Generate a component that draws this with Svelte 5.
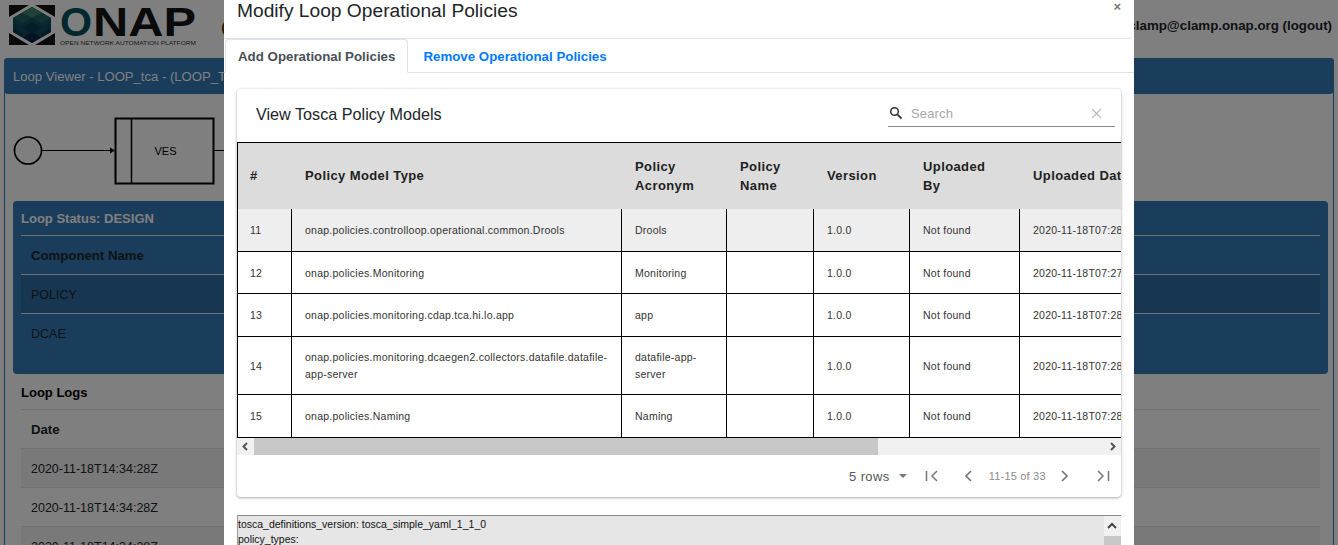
<script lang="ts">
  const components = ['POLICY', 'DCAE'];
  const logs = ['2020-11-18T14:34:28Z', '2020-11-18T14:34:28Z', '2020-11-18T14:34:28Z'];
  const columns = ['#', 'Policy Model Type', 'Policy Acronym', 'Policy Name', 'Version', 'Uploaded By', 'Uploaded Date'];
  const policies = [
    { id: 11, type: 'onap.policies.controlloop.operational.common.Drools', acronym: 'Drools', date: '2020-11-18T07:28:11Z' },
    { id: 12, type: 'onap.policies.Monitoring', acronym: 'Monitoring', date: '2020-11-18T07:27:58Z' },
    { id: 13, type: 'onap.policies.monitoring.cdap.tca.hi.lo.app', acronym: 'app', date: '2020-11-18T07:28:02Z' },
    { id: 14, type: 'onap.policies.monitoring.dcaegen2.collectors.datafile.datafile-app-server', acronym: 'datafile-app-server', date: '2020-11-18T07:28:05Z', tall: true },
    { id: 15, type: 'onap.policies.Naming', acronym: 'Naming', date: '2020-11-18T07:28:09Z' }
  ];
</script>

<div class="page">
  <nav class="navbar">
    <svg class="logo" width="197" height="46" viewBox="0 0 197 46">
      <path d="M9 5h20L9 17zM55 5H35l20 12zM9 45h20L9 33zM55 45H35l20-12z" fill="#151515" />
      <path d="M32 7l19 11v14L32 43 13 32V18z" fill="#0e4a58" />
      <path d="M32 7l19 11-9.500 5.500L32 18l-9.500 5.500L13 18z" fill="#1f6463" />
      <path d="M32 7l9.500 5.500L32 18l-9.500-5.500z" fill="#3d7f74" />
      <path d="M13 18l9.500 5.500L32 18l9.500 5.500L51 18v4l-19 11-19-11z" fill="#11525c" />
      <path d="M32 33l9.500-5.500L32 22l-9.500 5.500z" fill="#0a3c4f" />
      <path d="M32 43l-9.500-5.500L32 32l9.500 5.500z" fill="#0a2547" />
      <path d="M13 28l9.500 5.500-0 4L13 32zM51 28l-9.500 5.500v4L51 32z" fill="#0b3550" />
      <text x="60" y="36" class="logo-word" textLength="32" lengthAdjust="spacingAndGlyphs" fill="#04505e">O</text>
      <text x="93" y="36" class="logo-word" textLength="103" lengthAdjust="spacingAndGlyphs" fill="#151515">NAP</text>
      <text x="60" y="45" class="logo-tag" textLength="136" lengthAdjust="spacingAndGlyphs" fill="#333">OPEN NETWORK AUTOMATION PLATFORM</text>
    </svg>
    <span class="brand">CLAMP</span>
    <span class="user">Hello:clamp@clamp.onap.org (logout)</span>
  </nav>

  <section class="viewer">
    <div class="viewer-head">Loop Viewer - LOOP_tca - (LOOP_TCA_v1)</div>
    <div class="viewer-body">
      <svg class="diagram" width="300" height="95" viewBox="0 0 300 95">
        <circle cx="28" cy="55.500" r="13.500" fill="none" stroke="#000" stroke-width="1.700" />
        <path d="M42 55.500h68" stroke="#000" stroke-width="1" />
        <path d="M110 52.500l5 3-5 3z" fill="#000" />
        <rect x="115.500" y="23.500" width="98" height="65" fill="none" stroke="#000" stroke-width="2" />
        <path d="M131.500 23.500v65" stroke="#000" stroke-width="1.500" />
        <path d="M214 55.500h86" stroke="#000" stroke-width="1" />
        <text x="165.500" y="60" class="diagram-label">VES</text>
      </svg>

      <div class="status">
        <h3>Loop Status: DESIGN</h3>
        <div class="grid-row grid-head">Component Name</div>
        {#each components as name, i}
          <div class="grid-row" class:dark={i === 0}>{name}</div>
        {/each}
      </div>

      <div class="logs">
        <h3>Loop Logs</h3>
        <div class="grid-row grid-head">Date</div>
        {#each logs as date, i}
          <div class="grid-row" class:stripe={i % 2 === 0}>{date}</div>
        {/each}
      </div>
    </div>
  </section>
</div>

<div class="scrim"></div>

<div class="modal">
  <header class="modal-head">
    <h4>Modify Loop Operational Policies</h4>
    <span class="close">×</span>
  </header>

  <div class="tabs">
    <span class="tab active">Add Operational Policies</span>
    <span class="tab">Remove Operational Policies</span>
  </div>

  <div class="modal-body">
    <div class="card">
      <div class="toolbar">
        <h6>View Tosca Policy Models</h6>
        <div class="search">
          <svg width="14" height="14" viewBox="0 0 14 14">
            <circle cx="5.500" cy="5.500" r="3.800" fill="none" stroke="#333" stroke-width="1.500" />
            <path d="M8.300 8.300l4.200 4.200" stroke="#333" stroke-width="1.800" />
          </svg>
          <span class="placeholder">Search</span>
          <svg class="clear" width="11" height="11" viewBox="0 0 11 11">
            <path d="M1 1l9 9M10 1l-9 9" stroke="#bbb" stroke-width="1.100" />
          </svg>
        </div>
      </div>

      <div class="table-wrap">
        <table>
          <thead>
            <tr>
              {#each columns as col}
                <th>{col}</th>
              {/each}
            </tr>
          </thead>
          <tbody>
            {#each policies as p, i}
              <tr class:first={i === 0} class:tall={p.tall}>
                <td>{p.id}</td>
                <td>{p.type}</td>
                <td>{p.acronym}</td>
                <td></td>
                <td>1.0.0</td>
                <td>Not found</td>
                <td>{p.date}</td>
              </tr>
            {/each}
          </tbody>
        </table>
      </div>

      <div class="hscroll">
        <svg class="arrow" width="17" height="17" viewBox="0 0 17 17"><path d="M10 5l-3.500 3.500L10 12" fill="none" stroke="#555" stroke-width="2" /></svg>
        <div class="hthumb"></div>
        <svg class="arrow end" width="17" height="17" viewBox="0 0 17 17"><path d="M7 5l3.500 3.500L7 12" fill="none" stroke="#555" stroke-width="2" /></svg>
      </div>

      <div class="pager">
        <span class="rows">5 rows</span>
        <svg class="caret" width="8" height="4" viewBox="0 0 8 4"><path d="M0 0h8L4 4z" fill="#777" /></svg>
        <svg class="page-btn first-btn" width="14" height="12" viewBox="0 0 14 12"><path d="M1.500 1v10M12 1L7 6l5 5" fill="none" stroke="#777" stroke-width="1.500" /></svg>
        <svg class="page-btn prev-btn" width="8" height="12" viewBox="0 0 8 12"><path d="M7 1L2 6l5 5" fill="none" stroke="#777" stroke-width="1.700" /></svg>
        <span class="range">11-15 of 33</span>
        <svg class="page-btn next-btn" width="8" height="12" viewBox="0 0 8 12"><path d="M1 1l5 5-5 5" fill="none" stroke="#777" stroke-width="1.700" /></svg>
        <svg class="page-btn last-btn" width="14" height="12" viewBox="0 0 14 12"><path d="M2 1l5 5-5 5M12.500 1v10" fill="none" stroke="#777" stroke-width="1.500" /></svg>
      </div>
    </div>

    <div class="yaml">
      <div class="yaml-text">tosca_definitions_version: tosca_simple_yaml_1_1_0<br />policy_types:</div>
      <div class="vscroll">
        <svg width="16" height="20" viewBox="0 0 16 20"><path d="M4 12l4-4 4 4" fill="none" stroke="#444" stroke-width="2" /></svg>
        <div class="vthumb"></div>
      </div>
    </div>
  </div>
</div>

<style>
  :global(body) {
    margin: 0;
    height: 545px;
    overflow: hidden;
    background: #fff;
    font-family: "Liberation Sans", Arial, sans-serif;
    color: #212529;
  }

  h3, h4, h6 {
    margin: 0;
  }

  .page {
    height: 545px;
    overflow: hidden;
    font-size: 13.100px;
  }

  .navbar {
    height: 58px;
    display: flex;
    align-items: center;
  }

  .logo {
    flex: none;
    align-self: flex-start;
  }

  .logo-word {
    font-size: 40px;
    font-weight: 700;
  }

  .logo-tag {
    font-size: 6px;
  }

  .brand {
    margin-left: 24px;
    font-size: 24px;
    font-weight: 700;
    color: #4a3412;
  }

  .user {
    margin-left: auto;
    margin-right: 6px;
    margin-top: -8px;
    font-size: 13.300px;
    font-weight: 700;
    white-space: nowrap;
  }

  .viewer {
    margin: 0 4px;
    height: 487px;
    border: 1px solid #337ab7;
    border-bottom: 0;
    border-radius: 4px 4px 0 0;
    box-sizing: border-box;
  }

  .viewer-head {
    height: 36px;
    margin: -1px -1px 0;
    padding: 0 9px;
    line-height: 37px;
    background: #337ab7;
    color: #fff;
    border-radius: 4px 4px 4px 4px;
  }

  .viewer-body {
    padding: 0 5px 0 8px;
  }

  .diagram {
    display: block;
    margin-left: -13px;
    height: 95px;
    margin-bottom: 11px;
    margin-top: 1px;
  }

  .diagram-label {
    font-size: 11px;
    text-anchor: middle;
    fill: #000;
  }

  .status {
    height: 173px;
    padding: 0 8px;
    background: #337ab7;
    border-radius: 4px;
    box-sizing: border-box;
  }

  h3 {
    height: 34px;
    line-height: 36px;
    font-size: 13px;
    font-weight: 700;
    border-bottom: 1px solid #dee2e6;
    margin-left: 0;
  }

  .status h3 {
    color: #fff;
  }

  .logs {
    padding: 0 8px;
    margin-top: 1px;
  }

  .logs h3 {
    color: #000;
  }

  .grid-row {
    height: 39px;
    line-height: 40px;
    padding: 0 10px;
    font-size: 12.500px;
    border-bottom: 1px solid #dee2e6;
    box-sizing: border-box;
  }

  .status .grid-row:last-child {
    border-bottom: 0;
  }

  .grid-head {
    font-size: 13.200px;
    line-height: 39px;
    font-weight: 700;
  }

  .dark {
    background: rgba(0, 0, 0, 0.1);
  }

  .stripe {
    background: rgba(0, 0, 0, 0.05);
  }

  .scrim {
    position: fixed;
    inset: 0;
    background: rgba(0, 0, 0, 0.5);
  }

  .modal {
    position: fixed;
    top: 0;
    left: 224px;
    width: 910px;
    height: 545px;
    overflow: hidden;
    background: #fff;
  }

  .modal-head {
    height: 38px;
    box-sizing: content-box;
    padding: 0 13px;
    display: flex;
    justify-content: space-between;
    border-bottom: 1px solid #dee2e6;
    margin-right: 2px;
    border-bottom-right-radius: 4px;
  }

  h4 {
    font-size: 19.200px;
    line-height: 22px;
    font-weight: 400;
    color: #212529;
  }

  .close {
    font-size: 13px;
    line-height: 14px;
    font-weight: 700;
    color: #777;
    margin-right: -2px;
  }

  .tabs {
    display: flex;
    height: 34px;
    padding-left: 1px;
    border-bottom: 1px solid #dee2e6;
    box-sizing: border-box;
    font-size: 13.300px;
    font-weight: 700;
  }

  .tab {
    padding: 0 14px;
    line-height: 35px;
    color: #007bff;
    margin-right: 1px;
  }

  .tab.active {
    padding: 0 12px;
    height: 34px;
    color: #495057;
    background: #fff;
    border: 1px solid #dee2e6;
    border-bottom-color: #fff;
    border-radius: 4px 4px 0 0;
    box-sizing: border-box;
    line-height: 33px;
  }

  .modal-body {
    padding: 16px 13px 0;
  }

  .card {
    height: 408px;
    background: #fff;
    border-radius: 4px;
    box-shadow: 0 1px 3px rgba(0, 0, 0, 0.3), 0 0 3px rgba(0, 0, 0, 0.08);
    display: flex;
    flex-direction: column;
  }

  .toolbar {
    height: 53px;
    flex: none;
    display: flex;
    align-items: center;
    justify-content: space-between;
    padding: 0 6px 0 19px;
    box-sizing: border-box;
  }

  h6 {
    font-size: 16.200px;
    font-weight: 400;
    color: #212529;
    margin-top: -2px;
  }

  .search {
    width: 227px;
    height: 26px;
    margin-top: -4px;
    display: flex;
    align-items: center;
    gap: 9px;
    border-bottom: 1px solid #8a8a8a;
    box-sizing: border-box;
    padding-left: 1px;
  }

  .placeholder {
    font-size: 13px;
    line-height: 18px;
    padding-top: 2px;
    letter-spacing: 0.15px;
    color: #a8a8a8;
    margin-left: -1px;
  }

  .clear {
    margin-left: auto;
    margin-right: 13px;
  }

  .table-wrap {
    height: 296px;
    flex: none;
    overflow: hidden;
  }

  table {
    border-collapse: collapse;
    table-layout: fixed;
    width: 1034px;
  }

  th:nth-child(1) { width: 54px; }
  th:nth-child(2) { width: 330px; }
  th:nth-child(3) { width: 105px; }
  th:nth-child(4) { width: 87px; }
  th:nth-child(5) { width: 96px; }
  th:nth-child(6) { width: 110px; }
  th:nth-child(7) { width: 252px; }

  th {
    height: 66px;
    padding: 0 13px;
    background: #dcdcdc;
    border-top: 1px solid #000;
    border-left: 1px solid #dcdcdc;
    text-align: left;
    font-size: 13px;
    line-height: 19px;
    font-weight: 700;
    letter-spacing: 0.4px;
    color: #212121;
    box-sizing: border-box;
  }

  th:first-child {
    border-left: 1px solid #000;
    padding-left: 12px;
  }

  td {
    padding: 13px 13px 11.500px;
    border: 1px solid #000;
    font-size: 10.500px;
    line-height: 17px;
    letter-spacing: 0.25px;
    color: #333;
    white-space: normal;
    overflow: hidden;
  }

  td:first-child {
    padding-left: 12px;
  }

  tr.tall td {
    padding-top: 12.500px;
    padding-bottom: 10.500px;
  }

  tr.first td {
    padding-top: 13.750px;
    background: #eee;
    border-top: 0;
  }

  tr:last-child td {
    padding-bottom: 12px;
  }

  td:last-child {
    white-space: nowrap;
  }

  .hscroll {
    height: 17px;
    flex: none;
    display: flex;
    background: #f1f1f1;
  }

  .arrow {
    flex: none;
  }

  .arrow.end {
    margin-left: auto;
  }

  .hthumb {
    width: 624px;
    background: #c8c8c8;
  }

  .pager {
    flex: 1;
    display: flex;
    align-items: center;
    font-size: 13px;
    color: #555;
  }

  .rows {
    margin-left: 612px;
    letter-spacing: 0.4px;
  }

  .caret {
    margin-left: 9px;
  }

  .first-btn {
    margin-left: 18px;
  }

  .prev-btn {
    margin-left: 25px;
  }

  .range {
    margin-left: 17px;
    font-size: 11px;
    letter-spacing: 0.2px;
    color: #8a8a8a;
  }

  .next-btn {
    margin-left: 15px;
  }

  .last-btn {
    margin-left: 27px;
  }

  .yaml {
    margin-top: 18px;
    height: 40px;
    background: #e6e6e6;
    border-top: 1px solid #8a8a8a;
    border-left: 1px solid #999;
    display: flex;
    justify-content: space-between;
  }

  .yaml-text {
    padding-top: 1px;
    font-size: 10.500px;
    line-height: 15px;
    color: #111;
  }

  .vscroll {
    width: 17px;
    background: #f1f1f1;
    margin-right: 0;
  }

  .vscroll svg {
    display: block;
  }

  .vthumb {
    height: 20px;
    background: #c8c8c8;
  }
</style>
